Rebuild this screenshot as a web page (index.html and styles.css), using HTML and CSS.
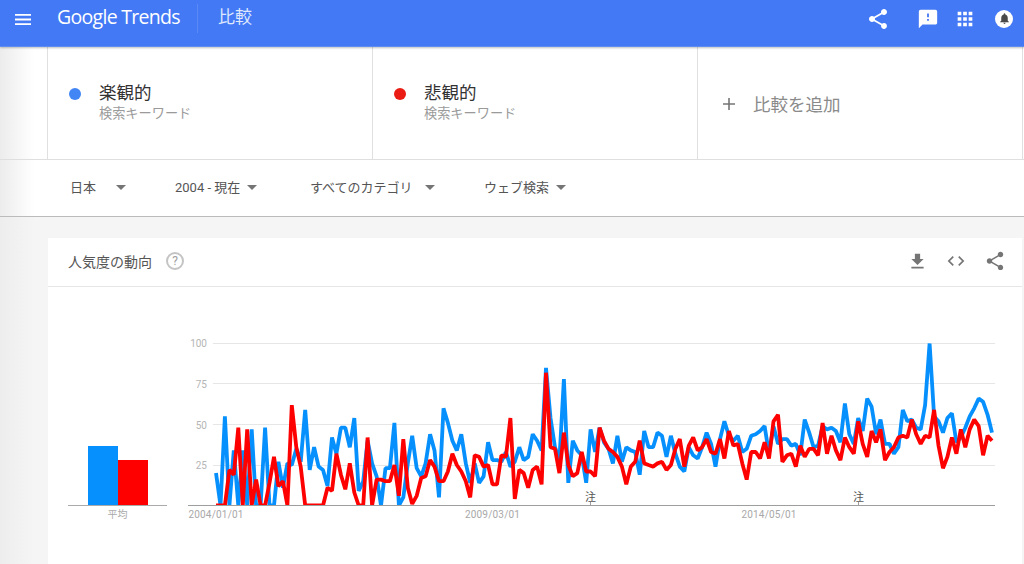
FILE: index.html
```html
<!DOCTYPE html>
<html lang="ja">
<head>
    <meta charset="UTF-8">
    <title>比較 - Google Trends</title>
    <link rel="stylesheet" href="styles.css">
</head>
<body>
    <header class="topbar">
        <svg class="menu-icon" width="16" height="11" viewBox="0 0 16 11"><path d="M0 0h16v1.8H0zM0 4.6h16v1.8H0zM0 9.2h16V11H0z" fill="#fff"/></svg>
        <span class="logo">Google Trends</span>
        <span class="page-title">比較</span>
        <div class="topbar-icons">
            <svg class="icon-share" width="24" height="24" viewBox="0 0 24 24"><path fill="#fff" d="M18 16.08c-.76 0-1.44.3-1.96.77L8.91 12.7c.05-.23.09-.46.09-.7s-.04-.47-.09-.7l7.05-4.11c.54.5 1.25.81 2.04.81 1.66 0 3-1.34 3-3s-1.34-3-3-3-3 1.34-3 3c0 .24.04.47.09.7L8.04 9.81C7.5 9.31 6.79 9 6 9c-1.66 0-3 1.34-3 3s1.34 3 3 3c.79 0 1.5-.31 2.04-.81l7.12 4.16c-.05.21-.08.43-.08.65 0 1.61 1.31 2.92 2.92 2.92s2.92-1.31 2.92-2.92-1.31-2.92-2.92-2.92z"/></svg>
            <svg class="icon-feedback" width="22" height="22" viewBox="0 0 24 24"><path fill="#fff" d="M20 2H4c-1.1 0-1.99.9-1.99 2L2 22l4-4h14c1.1 0 2-.9 2-2V4c0-1.1-.9-2-2-2zm-7 12h-2v-2h2v2zm0-4h-2V6h2v4z"/></svg>
            <svg class="icon-apps" width="22" height="22" viewBox="0 0 24 24"><path fill="#fff" d="M4 8h4V4H4v4zm6 12h4v-4h-4v4zm-6 0h4v-4H4v4zm0-6h4v-4H4v4zm6 0h4v-4h-4v4zm6-10v4h4V4h-4zm-6 4h4V4h-4v4zm6 6h4v-4h-4v4zm0 6h4v-4h-4v4z"/></svg>
            <span class="avatar">
                <svg width="13" height="13" viewBox="0 0 24 24"><path fill="#4a4a4a" d="M12 22c1.1 0 2-.9 2-2h-4c0 1.1.9 2 2 2zm6-6v-5c0-3.07-1.63-5.64-4.5-6.32V4c0-.83-.67-1.5-1.5-1.5s-1.5.67-1.5 1.5v.68C7.64 5.36 6 7.92 6 11v5l-2 2v1h16v-1l-2-2z"/></svg>
            </span>
        </div>
    </header>

    <section class="terms">
        <div class="term">
            <span class="dot dot-blue"></span>
            <div>
                <div class="term-name">楽観的</div>
                <div class="term-type">検索キーワード</div>
            </div>
        </div>
        <div class="term">
            <span class="dot dot-red"></span>
            <div>
                <div class="term-name">悲観的</div>
                <div class="term-type">検索キーワード</div>
            </div>
        </div>
        <div class="term term-add">
            <svg width="12" height="12" viewBox="0 0 12 12"><path d="M5.2 0h1.6v12H5.2zM0 5.2h12v1.6H0z" fill="#757575"/></svg>
            <span>比較を追加</span>
        </div>
    </section>

    <section class="filters">
        <div class="filter filter-geo">日本<i class="caret"></i></div>
        <div class="filter filter-time">2004 - 現在<i class="caret"></i></div>
        <div class="filter filter-cat">すべてのカテゴリ<i class="caret"></i></div>
        <div class="filter filter-type">ウェブ検索<i class="caret"></i></div>
    </section>

    <main class="content">
        <div class="card">
            <div class="card-head">
                <span class="card-title">人気度の動向</span>
                <span class="help">?</span>
                <div class="card-actions">
                    <svg width="21" height="21" viewBox="0 0 24 24"><path fill="#757575" d="M19 9h-4V3H9v6H5l7 7 7-7zM5 18v2h14v-2H5z"/></svg>
                    <svg width="20" height="20" viewBox="0 0 24 24"><path fill="#757575" d="M9.4 16.6 4.8 12l4.6-4.6L8 6l-6 6 6 6 1.4-1.4zm5.2 0 4.6-4.6-4.6-4.6L16 6l6 6-6 6-1.4-1.4z"/></svg>
                    <svg width="22" height="22" viewBox="0 0 24 24"><path fill="#757575" d="M18 16.08c-.76 0-1.44.3-1.96.77L8.91 12.7c.05-.23.09-.46.09-.7s-.04-.47-.09-.7l7.05-4.11c.54.5 1.25.81 2.04.81 1.66 0 3-1.34 3-3s-1.34-3-3-3-3 1.34-3 3c0 .24.04.47.09.7L8.04 9.81C7.5 9.31 6.79 9 6 9c-1.66 0-3 1.34-3 3s1.34 3 3 3c.79 0 1.5-.31 2.04-.81l7.12 4.16c-.05.21-.08.43-.08.65 0 1.61 1.31 2.92 2.92 2.92s2.92-1.31 2.92-2.92-1.31-2.92-2.92-2.92z"/></svg>
                </div>
            </div>
            <div class="card-body">
                <div class="averages">
                    <div class="bars">
                        <div class="bar bar-blue"></div>
                        <div class="bar bar-red"></div>
                    </div>
                    <div class="avg-label">平均</div>
                </div>
                <svg class="chart" width="816" height="210" viewBox="180 330 816 210">
                    <defs>
                        <clipPath id="plot"><rect x="213" y="343" width="783" height="163"/></clipPath>
                    </defs>
                    <g class="grid">
                        <line x1="213" x2="995" y1="343.5" y2="343.5"/>
                        <line x1="213" x2="995" y1="383.5" y2="383.5"/>
                        <line x1="213" x2="995" y1="424.5" y2="424.5"/>
                        <line x1="213" x2="995" y1="465.5" y2="465.5"/>
                    </g>
                    <g class="y-labels">
                        <text x="207" y="347">100</text>
                        <text x="207" y="388">75</text>
                        <text x="207" y="429">50</text>
                        <text x="207" y="469">25</text>
                    </g>
                    <g clip-path="url(#plot)">
                        <polyline id="line-blue" class="series series-blue"/>
                        <polyline id="line-red" class="series series-red"/>
                    </g>
                    <line class="axis" x1="188" x2="995" y1="505.5" y2="505.5"/>
                    <line class="axis" x1="590.5" x2="590.5" y1="502" y2="506"/>
                    <line class="axis" x1="858.5" x2="858.5" y1="502" y2="506"/>
                    <text class="note" x="590.5" y="501">注</text>
                    <text class="note" x="858.5" y="501">注</text>
                    <g class="x-labels">
                        <text x="216" y="518">2004/01/01</text>
                        <text x="492.5" y="518">2009/03/01</text>
                        <text x="769" y="518">2014/05/01</text>
                    </g>
                </svg>
            </div>
        </div>
    </main>

    <script src="chart.js"></script>
</body>
</html>
```

FILE: styles.css
```css
* {
    box-sizing: border-box;
}

html, body {
    height: 564px;
    overflow: hidden;
}

body {
    margin: 0;
    background: #f5f5f5;
    font-family: Roboto, "Noto Sans CJK JP", sans-serif;
    color: #444;
}

/* top bar */
.topbar {
    position: relative;
    z-index: 2;
    height: 47px;
    display: flex;
    align-items: center;
    background: #4479f5;
    border-bottom: 1px solid #5e8cf0;
    box-shadow: 0 1px 2px rgba(0, 0, 0, .25);
    color: #fff;
}

.menu-icon {
    margin-left: 15px;
    margin-top: -8px;
}

.logo {
    margin-left: 26px;
    width: 140px;
    font-family: "Open Sans", sans-serif;
    font-size: 19.5px;
    letter-spacing: -.7px;
    line-height: 36px;
    margin-top: -12px;
}

.page-title {
    margin-top: -9px;
    padding-left: 20px;
    height: 29px;
    line-height: 27px;
    border-left: 1px solid #5b8af6;
    font-size: 17px;
    color: #dfe8fd;
}

.topbar-icons {
    margin-left: auto;
    margin-right: 11px;
    margin-top: -9px;
    display: flex;
    align-items: center;
}

.topbar-icons svg {
    display: block;
}

.icon-feedback {
    margin-left: 27px;
}

.icon-apps {
    margin-left: 15px;
}

.avatar {
    width: 18px;
    height: 18px;
    margin-left: 19px;
    border-radius: 50%;
    background: #fff;
    display: flex;
    align-items: center;
    justify-content: center;
}

/* keyword row */
.terms {
    height: 113px;
    padding-left: 47px;
    display: grid;
    grid-template-columns: 325px 325px 326px 1fr;
    background: linear-gradient(to right, #ececec, #fff 34px);
    border-bottom: 1px solid #e0e0e0;
}

.term {
    padding-left: 21px;
    padding-top: 34px;
    display: flex;
    align-items: flex-start;
    gap: 18px;
    background: #fff;
    border-left: 1px solid #e0e0e0;
}

.term:nth-child(3) {
    border-right: 1px solid #e0e0e0;
}

.dot {
    width: 12px;
    height: 12px;
    margin-top: 7px;
    border-radius: 50%;
}

.dot-blue {
    background: #4285f4;
}

.dot-red {
    background: #ea1c14;
}

.term-name {
    font-size: 17.5px;
    line-height: 25px;
    color: #333;
}

.term-type {
    font-size: 13.2px;
    line-height: 16px;
    color: #9a9a9a;
}

.term-add {
    padding-left: 25px;
    padding-top: 1px;
    align-items: center;
    gap: 18px;
    font-size: 17.5px;
    color: #8a8a8a;
}

/* filter row */
.filters {
    height: 57px;
    padding-bottom: 3px;
    display: flex;
    align-items: center;
    background: linear-gradient(to right, #ececec, #fff 34px);
    border-bottom: 1px solid #bbb;
    box-shadow: 0 1px 2px rgba(0, 0, 0, .1);
    font-size: 13px;
    color: #555;
}

.filter {
    display: flex;
    align-items: center;
}

.filter-geo {
    margin-left: 70px;
    width: 105px;
}

.filter-geo .caret {
    margin-left: 20px;
}

.filter-time {
    width: 135px;
}

.filter-cat {
    width: 174px;
}

.filter-cat .caret {
    margin-left: 12px;
}

.caret {
    margin-left: 7px;
    margin-top: 1px;
    width: 0;
    height: 0;
    border-left: 5px solid transparent;
    border-right: 5px solid transparent;
    border-top: 5px solid #757575;
}

/* card */
.content {
    padding: 21px 2px 0 48px;
    height: 347px;
    background: linear-gradient(to right, #ededed, #f5f5f5 34px);
}

.card {
    height: 330px;
    background: #fff;
}

.card-head {
    height: 49px;
    padding-left: 20px;
    padding-bottom: 2px;
    display: flex;
    align-items: center;
    border-bottom: 1px solid #e6e6e6;
    font-size: 14px;
    color: #555;
}

.help {
    margin-left: 14px;
    width: 18px;
    height: 18px;
    border: 2px solid #c4c4c4;
    border-radius: 50%;
    font-size: 12px;
    line-height: 14px;
    text-align: center;
    color: #a0a0a0;
}

.card-actions {
    margin-left: auto;
    margin-right: 16px;
    display: flex;
    align-items: center;
    gap: 18px;
}

.card-body {
    position: relative;
    height: 277px;
}

.averages {
    position: absolute;
    left: 20px;
    top: 131px;
    width: 99px;
}

.bars {
    height: 88px;
    padding-left: 20px;
    display: flex;
    align-items: flex-end;
    border-bottom: 1px solid #aaa;
}

.bar {
    width: 30px;
}

.bar-blue {
    width: 29.5px;
    height: 59px;
    background: #0690fd;
}

.bar-red {
    height: 45px;
    background: #ff0000;
}

.avg-label {
    margin-top: 2px;
    font-size: 10px;
    line-height: 13px;
    text-align: center;
    color: #aaa;
}

.chart {
    position: absolute;
    left: 132px;
    top: 43px;
}

/* chart parts */
.grid line {
    stroke: #e6e6e6;
}

.axis {
    stroke: #9e9e9e;
}

.y-labels text {
    font-size: 10px;
    fill: #b5b5b5;
    text-anchor: end;
}

.x-labels text {
    font-size: 10px;
    fill: #a8a8a8;
    text-anchor: middle;
    letter-spacing: .2px;
}

.note {
    font-size: 11px;
    fill: #555;
    text-anchor: middle;
}

.series {
    fill: none;
    stroke-width: 3.8;
    stroke-linejoin: bevel;
}

.series-blue {
    stroke: #0690fd;
}

.series-red {
    stroke: #ff0000;
}
```

FILE: chart.js
```js
// monthly values, 2004/01 onward
var blue = [20,0,55,0,34,0,34,0,47,0,0,48,0,0,27,11,26,25,35,27,59,22,36,24,22,12,42,32,48,48,36,54,9,15,40,26,18,0,23,23,51,0,5,26,43,23,18,26,44,34,5,60,51,40,34,44,26,14,26,14,18,39,28,28,27,33,24,27,36,28,30,44,40,34,85,54,36,28,78,14,40,34,31,14,47,33,48,39,35,26,43,27,36,34,33,19,46,36,36,45,43,30,43,32,24,21,36,31,29,36,45,38,24,41,52,43,40,43,33,35,43,44,46,49,32,49,38,41,41,37,38,31,53,45,36,37,49,47,48,46,39,63,44,38,54,46,66,61,44,53,38,38,32,36,59,52,53,48,47,62,100,55,52,45,54,57,39,42,48,55,60,66,64,56,45];
var red = [0,0,0,22,19,48,0,47,0,16,0,0,14,30,12,15,0,62,36,24,0,0,0,0,0,11,9,32,19,10,26,8,0,0,42,0,16,16,15,15,25,6,41,11,1,6,17,18,28,24,15,15,21,32,25,21,15,5,31,30,24,25,13,13,31,30,54,4,22,20,11,22,24,13,82,36,35,20,45,25,18,20,33,21,21,18,48,40,35,33,30,24,13,24,27,40,26,25,24,26,27,22,25,35,41,24,37,42,34,36,41,33,32,41,29,46,37,38,26,16,33,33,29,39,29,52,56,27,31,32,24,37,30,35,35,31,51,32,43,34,28,42,36,32,52,38,30,46,39,47,28,33,36,42,43,42,53,44,38,43,42,59,37,23,30,42,32,47,36,47,53,49,31,43,40];

function toPoints(values) {
    return values.map(function (v, i) {
        var x = 216 + i * 4.46;
        var y = 505.5 - v * 1.62;
        return x.toFixed(1) + ',' + y.toFixed(1);
    }).join(' ');
}

document.getElementById('line-blue').setAttribute('points', toPoints(blue));
document.getElementById('line-red').setAttribute('points', toPoints(red));
```
